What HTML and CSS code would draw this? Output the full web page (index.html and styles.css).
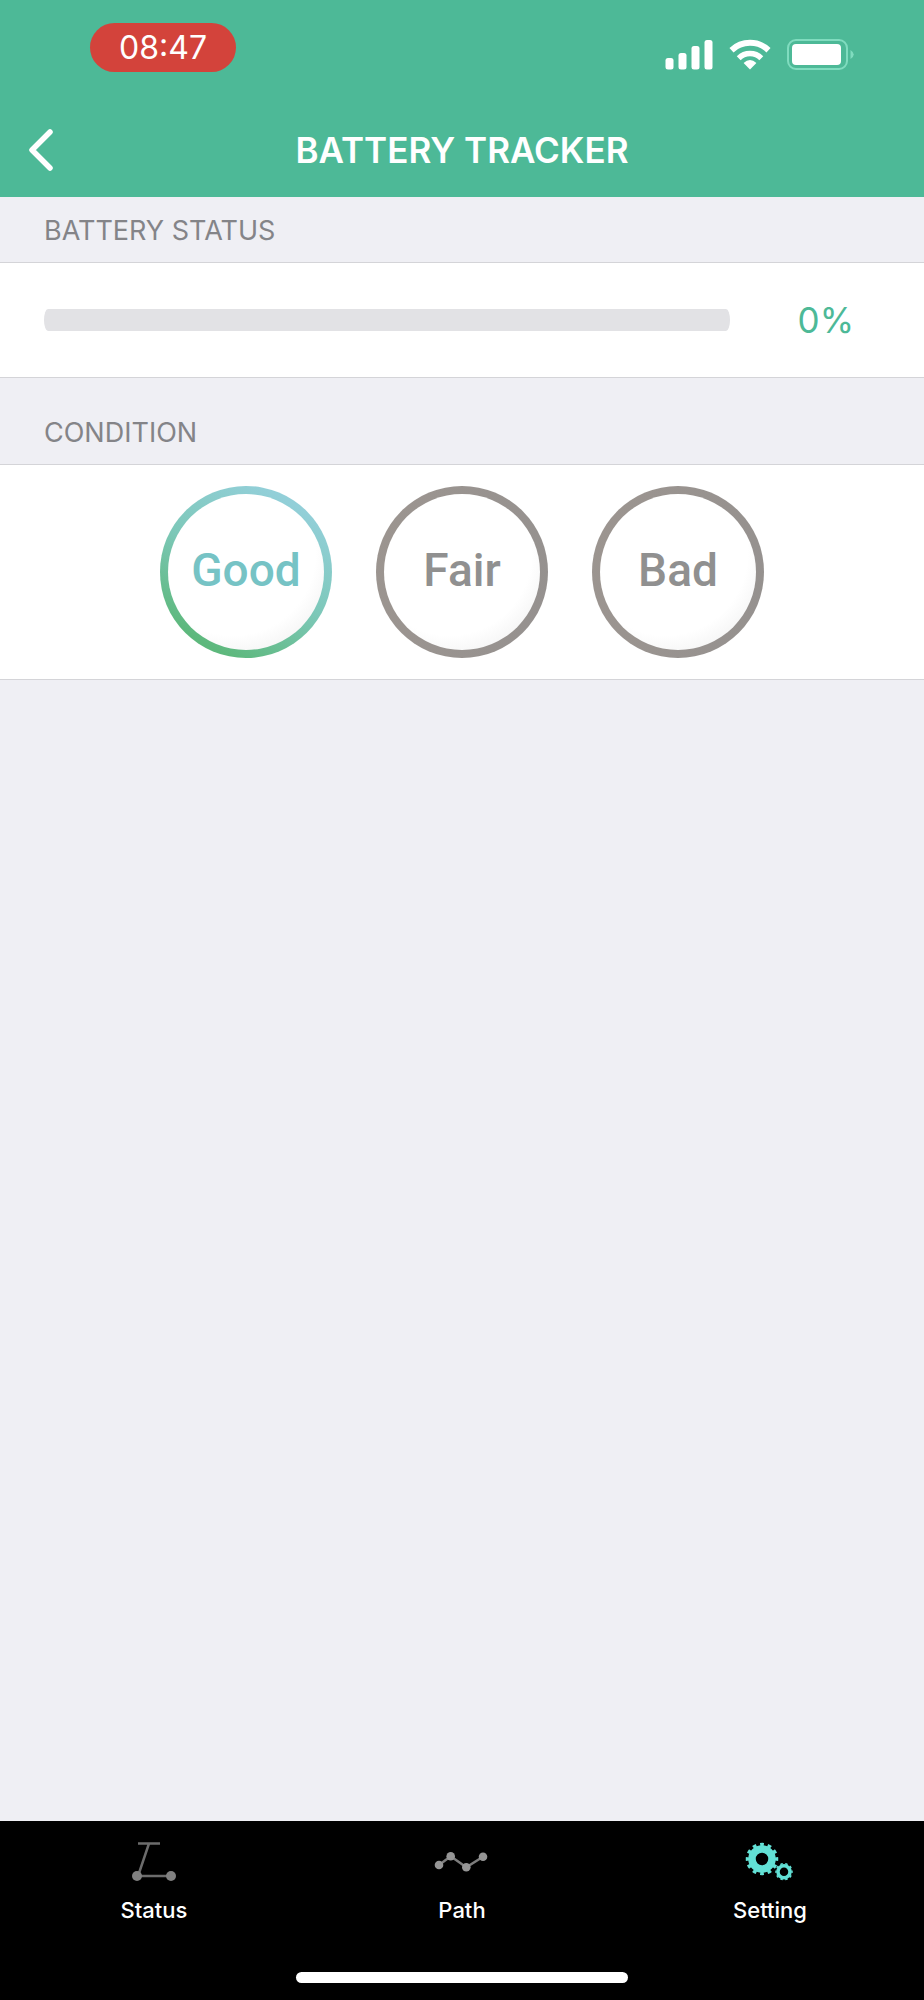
FILE: index.html
```html
<!DOCTYPE html>
<html lang="en">
<head>
    <meta charset="utf-8">
    <meta name="viewport" content="width=device-width, initial-scale=1">
    <title>Battery Tracker</title>
    <link rel="stylesheet" href="styles.css">
</head>
<body>
    <header class="header">
        <div class="statusbar">
            <span class="clock">08:47</span>
            <div class="indicators">
                <svg width="48" height="32" viewBox="0 0 48 32" fill="white">
                    <rect x="0.5" y="19" width="8" height="11.5" rx="2.5" />
                    <rect x="13.5" y="14" width="8" height="16.5" rx="2.5" />
                    <rect x="26.5" y="7" width="8" height="23.5" rx="2.5" />
                    <rect x="39.5" y="1" width="8" height="29.5" rx="2.5" />
                </svg>
                <svg width="42" height="32" viewBox="0 0 42 32" fill="none" stroke="white">
                    <path d="M2.5 11.2A27 27 0 0 1 39.5 11.2" stroke-width="6" />
                    <path d="M9.7 19.2A16 16 0 0 1 32.3 19.2" stroke-width="5.5" />
                    <path d="M21 30.5L14.6 24Q21 18 27.4 24Z" fill="white" stroke="none" />
                </svg>
                <svg width="67" height="32" viewBox="0 0 67 32">
                    <rect x="1" y="1" width="59" height="29" rx="8" fill="none" stroke="#80dcbf" stroke-width="2" />
                    <rect x="5" y="5" width="49" height="21" rx="4" fill="white" />
                    <path d="M63.5 11Q70 15.5 63.5 20Z" fill="#80dcbf" />
                </svg>
            </div>
        </div>
        <nav class="navbar">
            <a class="back" href="#" aria-label="Back">
                <svg width="26" height="42" viewBox="0 0 26 42" fill="none" stroke="white" stroke-width="5.5" stroke-linecap="round" stroke-linejoin="round">
                    <path d="M22 3L4 21L22 39" />
                </svg>
            </a>
            <h1 class="title">BATTERY TRACKER</h1>
        </nav>
    </header>

    <main class="content">
        <h2 class="section-title" id="battery-label">BATTERY STATUS</h2>
        <div class="panel battery">
            <progress class="level" value="0" max="100" aria-labelledby="battery-label"></progress>
            <span class="percent">0%</span>
        </div>
        <h2 class="section-title spaced" id="condition-label">CONDITION</h2>
        <div class="panel conditions" role="group" aria-labelledby="condition-label">
            <button type="button" class="condition selected" aria-pressed="true">Good</button>
            <button type="button" class="condition" aria-pressed="false">Fair</button>
            <button type="button" class="condition" aria-pressed="false">Bad</button>
        </div>
    </main>

    <footer class="footer">
        <nav class="tabs">
            <a class="tab" href="#status">
                <svg width="60" height="44" viewBox="0 0 60 44" fill="none" stroke="#6c6c6c" stroke-width="2.5">
                    <path d="M14 3.5H36M25 3.5L14 36H47" />
                    <circle cx="13" cy="36" r="5" fill="#808080" stroke="none" />
                    <circle cx="47" cy="36" r="5" fill="#808080" stroke="none" />
                </svg>
                <span>Status</span>
            </a>
            <a class="tab" href="#path">
                <svg width="60" height="44" viewBox="0 0 60 44" fill="#959595">
                    <path d="M7 25L18.7 16.3L34.3 27.3L51 16.7" fill="none" stroke="#7c7c7c" stroke-width="2.5" />
                    <circle cx="7" cy="25" r="4.3" />
                    <circle cx="18.7" cy="16.3" r="4.3" />
                    <circle cx="34.3" cy="27.3" r="4.3" />
                    <circle cx="51" cy="16.7" r="4.3" />
                </svg>
                <span>Path</span>
            </a>
            <a class="tab" href="#setting" aria-current="page">
                <svg width="60" height="44" viewBox="0 0 60 44" fill="none" stroke="#62e0d5">
                    <circle cx="22" cy="19" r="10" stroke-width="7.5" />
                    <circle cx="22" cy="19" r="14.5" stroke-width="3.5" pathLength="24" stroke-dasharray="1 1" stroke-dashoffset="0.5" />
                    <circle cx="44" cy="31.7" r="6" stroke-width="3.5" />
                    <circle cx="44" cy="31.7" r="8" stroke-width="1.5" pathLength="20" stroke-dasharray="1 1" stroke-dashoffset="0.5" />
                </svg>
                <span>Setting</span>
            </a>
        </nav>
        <div class="home-indicator"></div>
    </footer>
</body>
</html>
```
FILE: styles.css
```css
* {
    box-sizing: border-box;
}

body {
    margin: 0;
    min-height: 100vh;
    display: flex;
    flex-direction: column;
    background: #efeff4;
    font-family: Inter, "Liberation Sans", sans-serif;
}

h1,
h2 {
    margin: 0;
}

svg {
    display: block;
}

.header {
    background: #4db997;
    color: white;
}

.statusbar {
    display: flex;
    justify-content: space-between;
    align-items: flex-start;
    padding: 23px 70px 0 90px;
}

.clock {
    padding: 1px 29px 0;
    border-radius: 25px;
    background: #d3433b;
    font-size: 32px;
    line-height: 48px;
}

.indicators {
    display: flex;
    gap: 16px;
    padding-top: 16px;
}

.navbar {
    display: grid;
    grid-template-columns: 1fr auto 1fr;
    align-items: center;
    padding: 54px 28px 23px;
}

.title {
    font-size: 35px;
    font-weight: 600;
    line-height: 48px;
}

.content {
    flex: 1;
}

.section-title {
    padding: 16px 44px 13px;
    color: #848488;
    font-size: 27px;
    font-weight: 400;
    line-height: 36px;
}

.section-title.spaced {
    padding-top: 37px;
}

.panel {
    display: flex;
    align-items: center;
    border-top: 1px solid #d4d4d8;
    border-bottom: 1px solid #d4d4d8;
    background: white;
}

.battery {
    padding: 33px 44px;
}

.level {
    flex: 1;
    height: 22px;
    border: 0;
    border-radius: 4px / 11px;
    overflow: hidden;
    appearance: none;
    background: #e2e2e5;
}

.level::-webkit-progress-bar {
    background: #e2e2e5;
}

.level::-webkit-progress-value {
    background: #4db997;
}

.percent {
    width: 150px;
    padding-right: 26px;
    color: #4db997;
    font-size: 35px;
    font-weight: 400;
    line-height: 48px;
    text-align: right;
}

.conditions {
    justify-content: center;
    gap: 44px;
    padding: 21px;
}

.condition {
    width: 172px;
    height: 172px;
    padding: 0 0 4px;
    border: 8px solid transparent;
    border-radius: 50%;
    background:
        radial-gradient(circle at 42% 38%, white 62%, #eeeeee 90%) padding-box,
        linear-gradient(100deg, #9c9590, #95918f) border-box;
    color: #909090;
    font-family: Roboto, "Liberation Sans", sans-serif;
    font-size: 46px;
    font-weight: 500;
    cursor: pointer;
}

.condition.selected {
    background:
        radial-gradient(circle at 42% 38%, white 62%, #eeeeee 90%) padding-box,
        linear-gradient(210deg, #92cfd8 15%, #7dc8b9 50%, #5db87c 85%) border-box;
    color: #76c3c5;
}

.footer {
    background: black;
}

.tabs {
    display: grid;
    grid-template-columns: repeat(3, 1fr);
}

.tab {
    display: flex;
    flex-direction: column;
    align-items: center;
    gap: 14px;
    padding-top: 19px;
    color: white;
    font-size: 22px;
    font-weight: 500;
    line-height: 24px;
    text-decoration: none;
}

.home-indicator {
    width: 36%;
    height: 11px;
    margin: 50px auto 17px;
    border-radius: 6px;
    background: white;
}
```
